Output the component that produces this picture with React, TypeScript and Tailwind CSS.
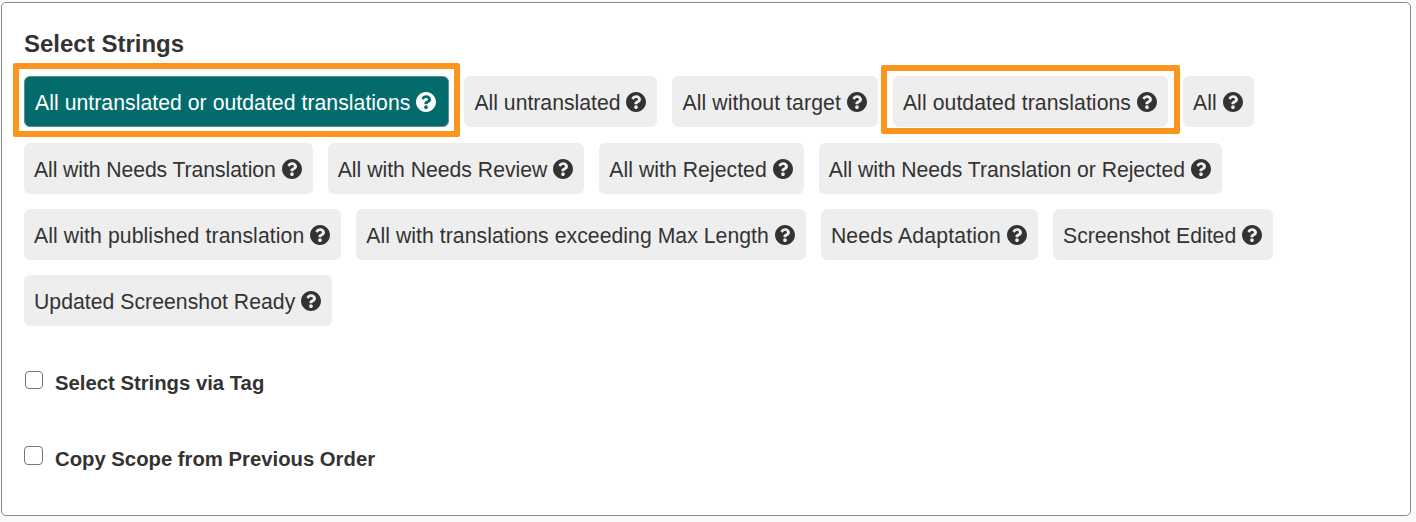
import { FaQuestionCircle } from 'react-icons/fa';

const rows = [
  [
    { label: 'All untranslated or outdated translations', active: true, highlight: 'first', tracking: 'tracking-[0.05px]' },
    { label: 'All untranslated' },
    { label: 'All without target', tracking: 'tracking-[0.1px]' },
    { label: 'All outdated translations', highlight: 'second', tracking: 'tracking-[0.08px]' },
    { label: 'All' },
  ],
  [
    { label: 'All with Needs Translation', tracking: 'tracking-[-0.08px]' },
    { label: 'All with Needs Review' },
    { label: 'All with Rejected', tracking: 'tracking-[0.05px]' },
    { label: 'All with Needs Translation or Rejected', tracking: 'tracking-[-0.05px]' },
  ],
  [
    { label: 'All with published translation', tracking: 'tracking-[0.1px]' },
    { label: 'All with translations exceeding Max Length', tracking: 'tracking-[0.05px]' },
    { label: 'Needs Adaptation', tracking: 'tracking-[0.18px]' },
    { label: 'Screenshot Edited' },
  ],
  [{ label: 'Updated Screenshot Ready', tracking: 'tracking-[0.04px]' }],
];

interface ScopeButtonProps {
  label: string;
  active?: boolean;
  highlight?: string;
  tracking?: string;
}

function ScopeButton({ label, active, highlight, tracking }: ScopeButtonProps) {
  return (
    <div
      className={`relative flex h-[51px] items-center gap-[6px] rounded-[6px] pt-[1px] text-[21.2px] ${
        active
          ? 'border border-[#5b8f8f] bg-[#036b6b] pl-[10px] pr-[12px] text-white'
          : 'bg-[#eeeeee] pl-[10px] pr-[11px] text-[#333333]'
      }`}
    >
      <span className={`whitespace-nowrap pt-[2px] ${tracking ?? ''}`}>{label}</span>
      <FaQuestionCircle className="h-[20px] w-[20px] scale-[1.03]" />
      {highlight === 'first' && (
        <span className="absolute -inset-x-[12px] -top-[14px] -bottom-[11px] rounded-[2px] border-[6px] border-[#fb951d]" />
      )}
      {highlight === 'second' && (
        <span className="absolute -inset-x-[12px] -top-[11px] -bottom-[7px] rounded-[2px] border-[6px] border-[#fb951d]" />
      )}
    </div>
  );
}

function CheckRow({ label, large }: { label: string; large?: boolean }) {
  return (
    <label className="flex items-center">
      <span className={`flex w-[19px] justify-end ${large ? '-translate-y-[4px]' : '-translate-y-[3px]'}`}>
        <span
          className={`rounded-[4px] border border-[#767676] bg-white ${
            large ? 'h-[19px] w-[19px]' : 'h-[18px] w-[18px]'
          }`}
        />
      </span>
      <span className="ml-[12px] text-[20.3px] leading-[24px] font-bold text-[#333333]">{label}</span>
    </label>
  );
}

export default function App() {
  return (
    <div className="h-[522px] w-[1416px] bg-[#fafafa] pl-[1px] pt-[2px] font-['Liberation_Sans',Arial,sans-serif]">
      <div className="h-[514px] w-[1410px] rounded-[5px] border border-[#8a8a8a] bg-white pl-[22px] pt-[26px]">
        <h2 className="text-[24px] leading-[30px] font-bold text-[#333333]">Select Strings</h2>
        <div className="mt-[17px] flex flex-col gap-[15px]">
          {rows.map((row, i) => (
            <div key={i} className={`flex gap-[15px] ${i === 0 ? 'mb-[1px]' : ''}`}>
              {row.map((item) => (
                <ScopeButton key={item.label} {...item} />
              ))}
            </div>
          ))}
        </div>
        <div className="mt-[45px] flex flex-col gap-[52px]">
          <CheckRow label="Select Strings via Tag" />
          <CheckRow label="Copy Scope from Previous Order" large />
        </div>
      </div>
    </div>
  );
}
